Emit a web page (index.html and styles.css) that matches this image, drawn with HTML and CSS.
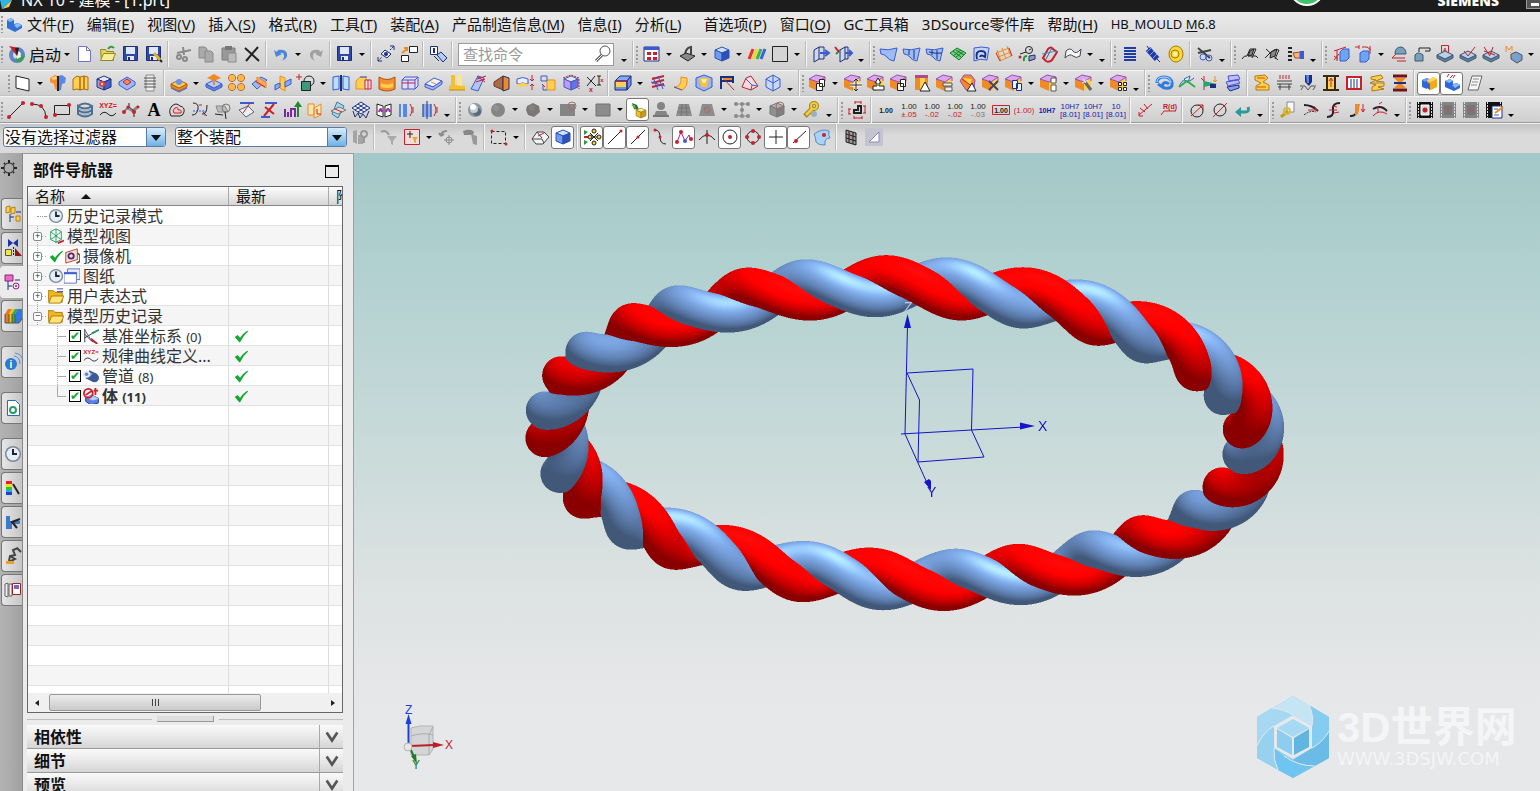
FILE: index.html
```html
<!DOCTYPE html>
<html lang="zh-CN">
<head>
  <meta charset="UTF-8">
  <meta name="viewport" content="width=device-width, initial-scale=1.0">
  <title>NX 10 - 建模 - [1.prt]</title>
  <link rel="stylesheet" href="styles.css">
</head>
<body>

<header class="titlebar">
  <svg class="app-logo" width="14" height="12" viewBox="0 0 14 12"><path fill="#29b6e8" d="M0 0h12L2 9z"/><path fill="#f6c94a" d="M2 9l10-9-3 7z"/></svg>
  <span class="title">NX 10 - 建模 - [1.prt]</span>
  <span class="badge"></span>
  <span class="brand">SIEMENS</span>
  <button class="minimize" aria-label="最小化"></button>
</header>

<nav class="menubar">
  <span class="grip"></span>
  <svg width="16" height="16" viewBox="0 0 16 16"><path fill="#2f6fd6" d="M1 4l4-2 3 2v4l4-1 4 2v3l-7 4-8-4z"/><path fill="#8fbdf5" d="M1 4l4-2 3 2-4 2zM8 9l4-2 4 2-5 3z"/></svg>
  <a href="#">文件(<u>F</u>)</a>
  <a href="#">编辑(<u>E</u>)</a>
  <a href="#">视图(<u>V</u>)</a>
  <a href="#">插入(<u>S</u>)</a>
  <a href="#">格式(<u>R</u>)</a>
  <a href="#">工具(<u>T</u>)</a>
  <a href="#">装配(<u>A</u>)</a>
  <a href="#">产品制造信息(<u>M</u>)</a>
  <a href="#">信息(<u>I</u>)</a>
  <a href="#">分析(<u>L</u>)</a>
  <a href="#" class="wide">首选项(<u>P</u>)</a>
  <a href="#">窗口(<u>O</u>)</a>
  <a href="#">GC工具箱</a>
  <a href="#">3DSource零件库</a>
  <a href="#">帮助(<u>H</u>)</a>
  <a href="#" class="latin">HB_MOULD <u>M</u>6.8</a>
</nav>

<!-- Toolbars: "v" drop-down, "V" overflow arrow, "|" separator, "#" next bar, "*" pressed -->
<div class="toolbar row-std">
  <span class="grip"></span>
  <button class="start"><span data-icon="start"></span>启动</button>
  <div class="tools" data-icons="v new open save saveas | cut copy paste delete | undo v redo | save v | link swap | info |"></div>
  <label class="search"><input type="text" placeholder="查找命令" aria-label="查找命令"><span data-icon="magnify"></span></label>
  <div class="tools" data-icons="V # fitwin v clip v cubeblue v stripes square v | door doorx V # sheet1 sheet2 sheet3 meshg swirl mesho gauge section ribbon v V # coil spring ring | scissors V # pen1 pen2 hand V # dimbox dimbox2 v probe arm tagA tagv tagk tagm v"></div>
</div>

<div class="toolbar row-feat">
  <span class="grip"></span>
  <div class="tools" data-icons="plane v extrude revolve hole unite thread | pattern v draft dots4 trim trim2 boolean v mirror split bend shell block thick flange flip fillet offset boxdash delx | blend v hatch curl cone rib pyramid wire V # opcopy v opmove oparrow opcopy opcyl opsheet opsplit opdel oppage v opnum v opwand v opgrid V # loop wave axisg layers | press1 press2 drill press3 bars press4 press5 | twin* partcopy* script V"></div>
</div>

<div class="toolbar row-curve">
  <span class="grip"></span>
  <div class="tools" data-icons="line arc rect helix xyz spline textA offcurve bridge project ribline cutline histo sheetp isect net mirrorc cyl1 cyl2 V # ball gball v gball2 v gsq v gsq2 v lamp* guser ggrid gno v gnodes v gcube v wrench V # dimL | d1 d2 d3 d3 d4 d5 d6 d7 d8 d8 d9 | rough rough2 | dia dia2 back V # keyp curve1 curve2 curve3 curve4 V # film film2 film2 filmedit V"></div>
</div>

<div class="toolbar row-select">
  <span class="combo combo-a"><select aria-label="类型过滤器"><option>没有选择过滤器</option></select></span>
  <span class="combo combo-b"><select aria-label="选择范围"><option>整个装配</option></select></span>
  <div class="tools" data-icons="gfind | gfilter selpt v gundo gbrush | marquee v | eraser cubeblue* | snap* seg* mid* ctrl zig* tan circ* quad plus* online* face | grid3 tri"></div>
</div>

<main class="workspace">
  <nav class="resource-bar">
    <button class="gear" data-icon="gear" aria-label="设置"></button>
    <button class="tab" data-icon="treeY" aria-label="装配导航器"></button>
    <button class="tab" data-icon="constraint" aria-label="约束导航器"></button>
    <button class="tab active" data-icon="treeP" aria-label="部件导航器"></button>
    <button class="tab" data-icon="books" aria-label="重用库"></button>
    <button class="tab spaced" data-icon="web" aria-label="浏览器"></button>
    <button class="tab spaced" data-icon="doc" aria-label="文档"></button>
    <button class="tab spaced" data-icon="clock" aria-label="历史记录"></button>
    <button class="tab" data-icon="spectrum" aria-label="材料"></button>
    <button class="tab" data-icon="clamp" aria-label="加工向导"></button>
    <button class="tab" data-icon="robot" aria-label="角色"></button>
    <button class="tab" data-icon="cards" aria-label="场景"></button>
  </nav>

  <aside class="navigator">
    <div class="nav-title"><h2>部件导航器</h2><button class="undock" aria-label="浮动"></button></div>
    <div class="tree-box">
      <table class="tree">
        <thead><tr><th>名称 <span class="sort"></span></th><th>最新</th><th>附</th></tr></thead>
        <tbody>
          <tr><td><div class="node"><i class="leaf"></i><span data-icon="clock"></span>历史记录模式</div></td><td></td><td></td></tr>
          <tr><td><div class="node"><button class="exp">+</button><span data-icon="views"></span>模型视图</div></td><td></td><td></td></tr>
          <tr><td><div class="node"><button class="exp">+</button><span data-icon="check"></span><span data-icon="camera"></span>摄像机</div></td><td></td><td></td></tr>
          <tr><td><div class="node"><button class="exp">+</button><span data-icon="clock"></span><span data-icon="drawing"></span>图纸</div></td><td></td><td></td></tr>
          <tr><td><div class="node"><button class="exp">+</button><span data-icon="folderx"></span>用户表达式</div></td><td></td><td></td></tr>
          <tr><td><div class="node"><button class="exp">−</button><span data-icon="folder"></span>模型历史记录</div></td><td></td><td></td></tr>
          <tr><td><div class="node sub"><input type="checkbox" id="f0" checked><span data-icon="csys"></span><label for="f0">基准坐标系 <small>(0)</small></label></div></td><td><span data-icon="check"></span></td><td></td></tr>
          <tr><td><div class="node sub"><input type="checkbox" id="f1" checked><span data-icon="xyz"></span><label for="f1">规律曲线定义...</label></div></td><td><span data-icon="check"></span></td><td></td></tr>
          <tr><td><div class="node sub"><input type="checkbox" id="f2" checked><span data-icon="tube"></span><label for="f2">管道 <small>(8)</small></label></div></td><td><span data-icon="check"></span></td><td></td></tr>
          <tr><td><div class="node sub last"><input type="checkbox" id="f3" checked><span data-icon="body"></span><label for="f3"><b>体 <small>(11)</small></b></label></div></td><td><span data-icon="check"></span></td><td></td></tr>
          <tr><td></td><td></td><td></td></tr>
          <tr><td></td><td></td><td></td></tr>
          <tr><td></td><td></td><td></td></tr>
          <tr><td></td><td></td><td></td></tr>
          <tr><td></td><td></td><td></td></tr>
          <tr><td></td><td></td><td></td></tr>
          <tr><td></td><td></td><td></td></tr>
          <tr><td></td><td></td><td></td></tr>
          <tr><td></td><td></td><td></td></tr>
          <tr><td></td><td></td><td></td></tr>
          <tr><td></td><td></td><td></td></tr>
          <tr><td></td><td></td><td></td></tr>
          <tr><td></td><td></td><td></td></tr>
          <tr><td></td><td></td><td></td></tr>
          <tr><td></td><td></td><td></td></tr>
        </tbody>
      </table>
      <div class="hscroll">
        <button class="left" aria-label="向左"></button>
        <div class="track"><div class="thumb"><i></i><i></i><i></i></div></div>
        <button class="right" aria-label="向右"></button>
      </div>
    </div>
    <div class="splitter"><span></span><b></b><span></span></div>
    <div class="sections">
      <button class="section"><span>相依性</span><i data-icon="chevron"></i></button>
      <button class="section"><span>细节</span><i data-icon="chevron"></i></button>
      <button class="section"><span>预览</span><i data-icon="chevron"></i></button>
    </div>
  </aside>

  <section class="viewport">
    <canvas id="model" class="model" width="780" height="370"></canvas>
    <svg class="csys" width="170" height="210" viewBox="890 295 170 210" fill="none" stroke="#1414c8">
      <path d="M905 434L907.500 325M901 434L1024 427M905 434L927 483M907 373L973 369L971.500 430L984 457L918 462M907 373L919.500 400L918 462"/>
      <path fill="#1414c8" stroke="none" d="M907.500 314l-3.500 14h7zM1035 426l-15-3.500v7zM931 490l-7-8 5-3 2 2z"/>
      <g fill="#1414c8" stroke="none" font-family="Liberation Sans, Arial, sans-serif" font-size="14"><text x="1038" y="431">X</text><text x="927" y="497">Y</text><text x="904" y="312" fill="#b9c9e6">Z</text></g>
    </svg>
    <svg class="triad" width="60" height="70" viewBox="400 702 60 70">
      <path fill="#d0d2d3" stroke="#a9abad" opacity=".85" d="M411 728l9-2h13v23l-4 6h-18z"/>
      <path fill="none" stroke="#a9abad" d="M411 736q12-4 22-1M429 755v-20l4-8"/>
      <path stroke="#1c3ee0" stroke-width="2" d="M408.500 745v-21"/><path fill="#1c3ee0" d="M408.500 714l-3 10h6z"/>
      <path stroke="#c01c2c" stroke-width="2" d="M410 746l24-1"/><path fill="#c01c2c" d="M444 745l-11-3v6z"/>
      <path stroke="#1f7a2e" stroke-width="2" d="M410 748l4 9"/><path fill="#1f7a2e" d="M417 764l-6-8 5-2z"/>
      <circle cx="408" cy="747" r="4" fill="#e6e6e4" stroke="#b5b5b5"/>
      <g font-family="Liberation Sans, Arial, sans-serif" font-size="12"><text x="405" y="714" fill="#1c3ee0">Z</text><text x="445" y="749" fill="#c01c2c">X</text><text x="412" y="769" fill="#1f7a2e">Y</text></g>
    </svg>
    <div class="watermark">
      <svg width="72" height="82" viewBox="0 0 72 82">
        <path fill="#93d0f0" d="M36 0l36 21v41L36 82 0 62V21z"/>
        <path fill="#c5e4f4" d="M15 12L36 0l16 9q5 10 3 21L36 19q-9-6-21-7z"/>
        <path fill="#84cdf1" d="M52 9l20 12v14Q66 46 55 52V30q2-11-3-21z"/>
        <path fill="#6abce6" d="M72 35v27L58 70Q42 70 27 60l9 4 19-12q11-6 17-17z"/>
        <path fill="#6fc4f0" d="M17 52l10 8q14 10 31 10L36 82 21 74q-5-10-4-22z"/>
        <path fill="#96d1f0" d="M0 62V50Q6 36 17 30v22q-1 12 4 22z"/>
        <path fill="#a6d8f2" d="M0 50V21l15-9q12 1 21 7L17 30Q6 36 0 50z"/>
        <path fill="none" stroke="#e6e9eb" d="M15 12q12 1 21 7M52 9q5 10 3 21M72 35q-6 11-17 17M58 70q-17 0-31-10M21 74q-5-10-4-22M0 50q6-14 17-20"/>
        <path fill="#e6e9eb" d="M36 19l19 11v22L36 63 17 52V30z"/>
        <path fill="#a8d9f2" d="M36 23l16 9-16 9-16-9z"/><path fill="#8ccdf0" d="M20 33l15 9v17l-15-8z"/><path fill="#62b5e0" d="M52 33l-15 9v17l15-8z"/>
      </svg>
      <div class="wm-text"><strong>3D世界网</strong><span>WWW.3DSJW.COM</span></div>
    </div>
  </section>
</main>

<script src="app.js"></script>
</body>
</html>
```
FILE: styles.css
```css
* {
  box-sizing: border-box;
}
body {
  margin: 0;
  height: 100vh;
  display: flex;
  flex-direction: column;
  overflow: hidden;
  background: #d9d9d9;
  color: #111;
  font-family: "Noto Sans", "Noto Sans CJK SC", sans-serif;
  font-size: 15px;
}
button {
  padding: 0;
  border: 0;
  background: none;
  font: inherit;
  color: inherit;
}
svg {
  display: block;
  flex: none;
}

/* title bar */
.titlebar {
  position: relative;
  display: flex;
  align-items: flex-end;
  flex: none;
  height: 12px;
  background: #1c1c1c;
  color: #fff;
}
.app-logo {
  margin-right: 7px;
}
.title {
  flex: 1;
  font-size: 16px;
  line-height: 20px;
  margin-bottom: 2px;
  white-space: nowrap;
}
.badge {
  position: absolute;
  right: 215px;
  bottom: 6px;
  width: 36px;
  height: 36px;
  border: 2px solid #fff;
  border-radius: 50%;
  background: #3fc46a;
}
.brand {
  font: 800 14px/16px "Open Sans", sans-serif;
  margin: 0 27px 3px 0;
}
.minimize {
  width: 14px;
  height: 9px;
  margin-bottom: 3px;
  background: #555 linear-gradient(#fff, #fff) 4px 3px / 8px 3px no-repeat;
  border: 1px solid #999;
  border-width: 0 0 1px 1px;
}

/* menu */
.menubar {
  display: flex;
  align-items: center;
  flex: none;
  height: 26px;
  padding-bottom: 3px;
  background: linear-gradient(#eaeaea, #dcdcdc);
  white-space: nowrap;
}
.menubar a {
  margin-left: 13px;
  color: #111;
  text-decoration: none;
}
.menubar svg + a {
  margin-left: 5px;
}
.menubar a.wide {
  margin-left: 22px;
}
.menubar .latin {
  font-size: 13px;
}
.menubar u {
  text-underline-offset: 2px;
}
.menubar .grip {
  margin-right: 2px;
}

/* toolbars */
.toolbar {
  display: flex;
  align-items: center;
  flex: none;
  border-top: 1px solid #f4f4f4;
  border-bottom: 1px solid #c4c4c4;
  background: linear-gradient(#e2e2e2, #cfcfcf);
  white-space: nowrap;
}
.row-std {
  height: 32px;
}
.row-feat {
  height: 26px;
  padding-left: 7px;
}
.row-curve {
  height: 27px;
  border-bottom-color: #999;
}
.row-select {
  height: 30px;
  padding-bottom: 3px;
  background: linear-gradient(#c4c4c4, #dadada 40%);
  border-bottom: 0;
}
.grip {
  flex: none;
  width: 4px;
  height: 18px;
  background: radial-gradient(#999 1px, transparent 1px) 0 0 / 4px 4px;
}
.tools {
  display: flex;
  align-items: center;
}
.tool {
  flex: none;
  display: grid;
  place-items: center;
  width: 23px;
  height: 23px;
}
.tool.on {
  border: 1px solid #777;
  border-radius: 3px;
  background: #fff;
}
.drop {
  flex: none;
  display: grid;
  place-items: center;
  width: 12px;
  height: 23px;
}
.drop::before {
  content: "";
  border: 3px solid transparent;
  border-top-color: #000;
  border-bottom: 0;
}
.drop.low {
  place-items: end center;
  padding-bottom: 4px;
}
.sep {
  flex: none;
  width: 2px;
  height: 26px;
  margin: 0 2px;
  background: linear-gradient(90deg, #bbb 50%, #f6f6f6 50%);
}
.tools .grip {
  margin: 0 1px 0 -1px;
}
.start {
  display: flex;
  align-items: center;
  gap: 2px;
  margin-left: 3px;
  font-size: 16px;
}
.search {
  display: flex;
  align-items: center;
  width: 156px;
  height: 23px;
  margin: 0 4px 0 3px;
  border: 1px solid #999;
  background: #fff;
}
.search input {
  min-width: 0;
  flex: 1;
  border: 0;
  outline: 0;
  padding: 0 4px;
  background: none;
  font: inherit;
}
.search input::placeholder {
  color: #999;
}
.combo {
  position: relative;
  height: 20px;
  margin-left: 3px;
}
.combo-a {
  width: 163px;
}
.combo-b {
  width: 172px;
  margin: 0 1px 0 9px;
}
.combo select {
  appearance: none;
  width: 100%;
  height: 20px;
  padding: 0 1px;
  border: 1px solid #5b7ba5;
  border-radius: 3px;
  background: #fff;
  color: #111;
  font: inherit;
  font-size: 16px;
  line-height: 18px;
}
/* blue drop-down cap on top of the select */
.combo::before {
  content: "";
  position: absolute;
  right: 1px;
  top: 1px;
  width: 18px;
  height: 18px;
  border-left: 1px solid #5b7ba5;
  border-radius: 0 2px 2px 0;
  background: linear-gradient(#d8ecfb, #a5d0f2 50%, #6fb1e6);
  pointer-events: none;
}
.combo::after {
  content: "";
  position: absolute;
  right: 5px;
  top: 8px;
  border: 5px solid transparent;
  border-top: 6px solid #111;
  border-bottom: 0;
  pointer-events: none;
}

/* workspace */
.workspace {
  flex: 1;
  min-height: 0;
  display: flex;
}
.resource-bar {
  flex: none;
  width: 23px;
  padding-top: 5px;
  display: flex;
  flex-direction: column;
  background: linear-gradient(90deg, #b3b3b3, #a2a2a2);
  border-right: 1px solid #888;
}
.gear {
  height: 20px;
  margin: 0 0 20px -1px;
}
.tab {
  flex: none;
  height: 32px;
  margin: 0 0 2px 1px;
  padding-left: 1px;
  border: 1px solid #777;
  border-right: 0;
  border-radius: 4px 0 0 4px;
  background: linear-gradient(90deg, #e6e6e6, #c6c6c6);
}
.tab.active {
  margin-right: -1px;
  margin-left: 0;
  border-color: #ebebeb;
  background: #ebebeb;
}
.tab.spaced {
  margin-top: 12px;
}
.navigator {
  flex: none;
  width: 331px;
  padding: 0 10px 0 4px;
  display: flex;
  flex-direction: column;
  background: #ebebeb;
  border-top: 1px solid #999;
  border-right: 1px solid #93a5a8;
}
.nav-title {
  flex: none;
  display: flex;
  justify-content: space-between;
  align-items: center;
  height: 32px;
  padding: 0 4px 2px 6px;
}
.nav-title h2 {
  margin: 0;
  font-size: 16px;
}
.undock {
  width: 14px;
  height: 13px;
  margin-top: 4px;
  border: 1px solid #000;
  border-top-width: 2px;
}
.tree-box {
  flex: 1;
  min-height: 0;
  display: flex;
  flex-direction: column;
  justify-content: space-between;
  overflow: hidden;
  border: 1px solid #666;
  background: #fff;
}
.tree {
  flex: 1;
  display: block;
  min-height: 0;
  overflow: hidden;
  width: 100%;
  border-spacing: 0;
}
.tree tr {
  display: grid;
  grid-template-columns: 201px 100px 1fr;
}
.tree th,
.tree td {
  height: 20px;
  padding: 0;
  overflow: hidden;
  line-height: 20px;
  white-space: nowrap;
  border-right: 1px solid #ddd;
}
.tree th {
  height: 19px;
  padding: 0 7px;
  line-height: 18px;
  text-align: left;
  font-weight: normal;
  background: linear-gradient(#fdfdfd, #d6d6d6);
  border-right-color: #aaa;
  border-bottom: 1px solid #888;
}
.tree td {
  border-bottom: 1px solid #e2e2e2;
}
.tree td:nth-child(2) {
  padding: 2px 0 0 4px;
}
.tree tbody tr:nth-child(even) {
  background: #f5f5f5;
}
.sort {
  display: inline-block;
  margin: 0 0 3px 12px;
  border: 5px solid transparent;
  border-bottom-color: #111;
  border-top: 0;
}
.node {
  display: flex;
  align-items: center;
  height: 20px;
  padding-left: 5px;
  color: #333;
  font-size: 16px;
  background: linear-gradient(90deg, #aaa 50%, transparent 50%) 14px 10px / 2px 1px no-repeat,
    linear-gradient(90deg, #aaa 50%, transparent 50%) 17px 10px / 2px 1px no-repeat,
    linear-gradient(#aaa 50%, transparent 50%) 9px 0 / 1px 2px repeat-y;
}
tr:first-child .node {
  background-position: 14px 10px, 17px 10px, 9px 10px;
  background-repeat: no-repeat;
}
.node [data-icon] {
  width: 16px;
}
.node > [data-icon]:last-of-type {
  margin-right: 3px;
}
.node small {
  font-size: 13px;
}
.exp {
  width: 9px;
  height: 9px;
  margin-right: 6px;
  border: 1px solid #888;
  border-radius: 2px;
  background: #fff;
  font-size: 9px;
  line-height: 6px;
}
.leaf {
  width: 10px;
  height: 1px;
  margin: 0 1px 0 4px;
  border-top: 1px dotted #999;
}
.sub {
  padding-left: 41px;
  background: linear-gradient(90deg, #aaa 50%, transparent 50%) 29px 10px / 2px 1px repeat-x content-box,
    linear-gradient(#aaa, #aaa) 29px 10px / 9px 1px no-repeat,
    linear-gradient(#aaa 50%, transparent 50%) 29px 0 / 1px 2px repeat-y;
}
.sub.last {
  background: linear-gradient(#aaa, #aaa) 29px 10px / 9px 1px no-repeat,
    linear-gradient(#aaa, #aaa) 29px 0 / 1px 10px no-repeat;
}
.sub:not(.last) {
  background: linear-gradient(#aaa, #aaa) 29px 10px / 9px 1px no-repeat,
    linear-gradient(#aaa 50%, transparent 50%) 29px 0 / 1px 2px repeat-y;
}
.sub input {
  appearance: none;
  flex: none;
  width: 12px;
  height: 12px;
  margin: 0 2px 0 0;
  border: 1px solid #000;
  background: #fff;
}
.sub input:checked::after {
  content: "✔";
  display: block;
  color: #14a82c;
  font: 12px/10px "DejaVu Sans", sans-serif;
}
.hscroll {
  flex: none;
  display: flex;
  align-items: center;
  height: 19px;
  padding: 0 7px;
  background: #f0f0f0;
}
.left,
.right {
  border: 3px solid transparent;
}
.left {
  border-right: 4px solid #222;
  border-left: 0;
}
.right {
  border-left: 4px solid #222;
  border-right: 0;
}
.track {
  flex: 1;
  padding: 0 10px;
}
.thumb {
  width: 78%;
  height: 17px;
  display: flex;
  justify-content: center;
  align-items: center;
  gap: 2px;
  border: 1px solid #999;
  border-radius: 2px;
  background: linear-gradient(#ececec, #c9c9c9);
}
.thumb i {
  width: 1px;
  height: 7px;
  background: #444;
}
.splitter {
  flex: none;
  display: flex;
  align-items: center;
  gap: 5px;
  height: 12px;
}
.splitter span {
  flex: 1;
  height: 1px;
  background: #bbb;
}
.splitter b {
  width: 57px;
  height: 6px;
  border: 1px solid #999;
  border-width: 0 1px 1px 0;
  background: #ddd;
}
.sections {
  flex: none;
  height: 66px;
  overflow: hidden;
}
.section {
  display: flex;
  align-items: center;
  width: 100%;
  height: 24px;
  border-bottom: 1px solid #999;
  background: linear-gradient(#fafafa, #e9e9e9 50%, #d5d5d5);
  font-size: 16px;
  font-weight: bold;
}
.section span {
  flex: 1;
  padding-left: 7px;
  line-height: 20px;
  text-align: left;
}
.section i {
  display: grid;
  place-items: center;
  width: 24px;
  height: 23px;
  border-left: 1px solid #aaa;
}

/* graphics window */
.viewport {
  position: relative;
  flex: 1;
  overflow: hidden;
  background: linear-gradient(#a3c8c7, #b3d1d1 20%, #c8dad9 45%, #dde2e2 68%, #e6e7e9 85%, #e6e8ea);
}
.model {
  position: absolute;
  left: 161px;
  top: 95px;
}
.csys {
  position: absolute;
  left: 536px;
  top: 142px;
}
.triad {
  position: absolute;
  left: 46px;
  top: 549px;
}
.watermark {
  position: absolute;
  right: 24px;
  bottom: 13px;
  display: flex;
  align-items: center;
  gap: 8px;
  color: #f4f5f6;
}
.wm-text {
  display: flex;
  flex-direction: column;
  width: 179px;
}
.wm-text strong {
  font: bold 42px/44px "Liberation Sans", "Noto Sans CJK SC", sans-serif;
  white-space: nowrap;
}
.wm-text span {
  font: 18px/18px "DejaVu Sans", sans-serif;
}
```
FILE: app.js
```js
// ---- icon helpers, all icons use a 20x20 box ----
const f = (c, d) => `<path fill="${c}" d="${d}"/>`;
const s = (c, d, w = 1) => `<path fill="none" stroke="${c}" stroke-width="${w}" d="${d}"/>`;
const fs = (c, k, d) => `<path fill="${c}" stroke="${k}" d="${d}"/>`;
const dash = (c, d) => `<path fill="none" stroke="${c}" stroke-dasharray="2 1" d="${d}"/>`;
const dot = (c, x, y, r = 2) => `<circle cx="${x}" cy="${y}" r="${r}" fill="${c}"/>`;
const ring = (c, x, y, r, w = 1) => `<circle cx="${x}" cy="${y}" r="${r}" fill="none" stroke="${c}" stroke-width="${w}"/>`;
const t = (c, x, y, size, str, w = 'bold') => `<text x="${x}" y="${y}" fill="${c}" font-size="${size}" text-anchor="middle" font-weight="${w}" font-family="Liberation Sans, Arial, sans-serif">${str}</text>`;

const B = '#3b5bd0', N = '#1c2f7c', L = '#b4ccf8', O = '#f08a24', Y = '#ffcf52', R = '#c8202c', G = '#8a8a8a', K = '#222';

const box = (top, left, right, k) =>
  fs(top, k, 'M10 3l7 3-7 3-7-3z') + fs(left, k, 'M3 6l7 3v8l-7-3z') + fs(right, k, 'M17 6l-7 3v8l7-3z');
const slab = (top, side, k) =>
  fs(side, k, 'M2 11v3l8 4 8-4v-3l-8 4z') + fs(top, k, 'M10 7l8 4-8 4-8-4z');
const op = f('#d9a8ea', 'M1 6l7-4 9 2-6 5z') + f(O, 'M1 6l9 3v9l-9-4z') + f(Y, 'M10 9l7-5v9l-7 5z') + s('#9a4cb8', 'M1 6l7-4 9 2v4M1 6l9 3 7-5', 1);
const floppy = fs('#2f49a8', N, 'M2.500 2.500h14v14h-14z') + f('#dfe8f8', 'M5 3h9v7H5z') + f('#e8e8e8', 'M6 12h7v4H6z') + f(N, 'M7 13h2v3H7z');
const sheet = f('#9dbcf5', 'M1 5q8 2 17-1l-3 13q-6-1-7-4-3-3-6-3z') + s(B, 'M1 5q8 2 17-1l-3 13q-6-1-7-4-3-3-6-3z');
const dim = (a, b, c = K, d = R) => t(c, 10, 9, 8, a, 'normal') + t(d, 10, 17, 8, b, 'normal');
const photo = c => f(c, 'M2 2h16v16H2z') + dash('#ddd', 'M3.500 2v16M16.500 2v16');

const icons = {
  start: ring('#5a86c8', 10, 11, 6, 4) + f('#3aa048', 'M10 11l8 1-4 6-6-1z') + f('#e8eef8', 'M8 10l5-2 1 5-4 2z') + f(R, 'M2 2l10 2-2 8z') + f(K, 'M8 4l4 0-2 8z'),
  new: fs('#fff', '#6f74c8', 'M3.500 2.500h8l4 4v11h-12z') + s('#6f74c8', 'M11.500 2.500v4h4'),
  open: fs('#e8d55a', '#8f8a20', 'M2.500 5.500h5l1 2h7v9h-12z') + fs('#f6ee9a', '#8f8a20', 'M5.500 9.500h12l-3 7h-12z') + s('#3a9a3a', 'M10 5q3-4 6-1', 2),
  save: floppy,
  saveas: floppy + s('#e0b030', 'M10 9l7 8', 3) + s(K, 'M16 16l2 2', 2),
  cut: s(G, 'M10 3l1 8M4 9l14-3', 2) + ring(G, 6, 13, 2, 2) + ring(G, 12, 15, 2, 2),
  copy: fs('#aaa', G, 'M3 3h6l2 2v9H3z') + fs('#aaa', G, 'M9 7h6l2 2v9H9z'),
  paste: fs('#999', '#7d7d7d', 'M3 4h13v12H3z') + fs('#bbb', G, 'M9 9h8v9H9z') + f('#777', 'M6 2h7v4H6z'),
  delete: s('#222', 'M3 4l14 13M16 3L4 17', 2),
  undo: f('#4a86d8', 'M3 6l2 7 6-3-2-1q4-1 4 3t-3 5q7-2 6-7t-9-4L6 8z'),
  redo: f('#a0a0a0', 'M17 6l-2 7-6-3 2-1q-4-1-4 3t3 5Q3 15 4 10t9-4l1 2z'),
  link: fs('#e8ecff', N, 'M9 6l6 4-4 4-6-4z') + dash(N, 'M2 17l4-4M14 6l4-4') + s(N, 'M2 13v4h4M14 2h4v4') + dot(N, 10, 10, 2),
  swap: fs('#fff', K, 'M10.500 2.500h8v6h-8zM2.500 11.500h7v6h-7z') + s(O, 'M3 9l5-4M5 4h3v3', 2),
  info: fs('#fff', N, 'M2.500 2.500h7v8h-7z') + f(N, 'M5 4h2v5H5z') + fs(L, N, 'M9 11l4-3 6 6-4 4z') + s(N, 'M6 12l5 5'),
  magnify: ring('#555', 12, 7, 5, 1) + s('#555', 'M9 11l-6 6', 3) + s('#fff', 'M9 11l-6 6'),
  fitwin: fs('#fff', N, 'M2 3h15v14H2z') + f(B, 'M2 3h15v3H2z') + f(R, 'M5 8h4v3H5zM11 8h4v3h-4zM5 13h4v3H5zM11 13h4v3h-4z'),
  clip: s('#444', 'M8 12q0-8 6-9v7', 2) + fs('#888', K, 'M3 12l6-3 9 3-7 5z'),
  cubeblue: box('#cfe0fc', '#6f9cf0', '#2c52b8', '#2c52b8'),
  stripes: s('#e83030', 'M2 15l4-10', 3) + s('#f0d820', 'M6 15l4-10', 3) + s('#34b44a', 'M10 15l4-10', 3) + s('#3464d8', 'M14 15l4-10', 3),
  square: fs('#d4d4d4', K, 'M2.500 2.500h15v15h-15z'),
  door: fs('#cfd8ea', N, 'M3 6l5-3v12l-5 3zM8 3h5v12H8') + s(B, 'M9 9h8M14 6l4 3-4 3', 2),
  doorx: fs('#cfd8ea', N, 'M6 6l5-3v12l-5 3zM11 3h3v12h-3') + s('#1f9a38', 'M2 10l4-4', 2) + s(R, 'M1 3l4 5', 2) + s(B, 'M11 9h7M15 6l3 3-3 3', 2),
  sheet1: sheet,
  sheet2: sheet + s(N, 'M7 6v5M12 6v9'),
  sheet3: sheet + s(N, 'M7 6v5M12 6v9M4 8q7 2 13 1'),
  meshg: fs('#6ed07e', '#1d7a2e', 'M2 9l7-5 9 5-7 7z') + s('#1d7a2e', 'M5 7l8 6M8 6l8 5M5 12l8-6M8 13l8-6'),
  swirl: fs('#c4d4fa', B, 'M3 4q8-2 15 0l-2 12q-7-2-13 1z') + s(N, 'M6 15q-2-8 4-8t4 6q-4-3-5 0', 2),
  mesho: s(O, 'M3 6l4 11M8 4l4 11M13 2l4 11M2 9l13-5M4 13l13-5M6 17l11-5') + s(R, 'M2 9l4 8M15 4l3 8', 1),
  gauge: ring(K, 12, 6, 3.500, 1) + s(K, 'M12 6l2-1M3 10l6-2') + s('#1f9a38', 'M7 17q-1-5 3-5', 2) + fs('#99a', N, 'M12 12l6-1v4l-6 2z') + dot(R, 3, 13, 1.500),
  section: s(R, 'M3 14l5-9q3-3 5 0l4 3-5 8q-3 3-6 1z', 2) + s('#2aa0b0', 'M2 10l15-3') + s(B, 'M6 15l6-11', 1),
  ribbon: fs('#f4f6fa', '#444', 'M3 7q4-4 7 0t8-2l-1 7q-4 3-7 0t-8 2z'),
  coil: s('#1f3da8', 'M4 4h12M4 7h12M4 10h12M4 13h12M4 16h12', 2),
  spring: s('#1f3da8', 'M5 5l9 10', 6) + s('#7f9cf0', 'M8 4l-4 4M11 7l-4 4M14 10l-4 4') + s(N, 'M4 2l2 3M14 15l3 3', 1),
  ring: `<ellipse cx="10" cy="10" rx="7" ry="8" fill="#ffd83a" stroke="#a07a08"/>` + ring('#a07a08', 9, 10, 4, 1) + dot('#fff4b0', 9, 10, 2),
  scissors: s('#444', 'M3 4l12 10M3 9L16 6', 2) + ring(B, 14, 14, 3, 1) + ring(B, 8, 13, 3, 1),
  pen1: s(K, 'M2 15q2-4 5-3l3-7h6l-4 9M8 12h8l2 2', 1) + fs('#888', K, 'M10 7l4-2-2 6-4 1z'),
  pen2: s(K, 'M3 5l12 11M2 14l6-6q4-4 8-2l-4 9') + fs('#888', K, 'M8 8l6-3-2 7-5 2z'),
  hand: s(K, 'M2 4h4M2 8h4M2 12h4M2 16h4', 2) + fs('#ffb27a', '#a04a20', 'M7 9l7-1v6H9z') + f(B, 'M14 7h4v8h-4z'),
  dimbox: fs('#6ea4f0', B, 'M9 8l3-3h6v9l-3 3H9z') + s(R, 'M3 7l12-4M3 12l4 3M3 16l5-6M6 6v11'),
  dimbox2: fs('#6ea4f0', B, 'M6 9l3-2h6v8l-3 3H6z') + s(R, 'M1 3h4M8 3h5M5 1v4M13 3l4 3M16 2v8'),
  probe: fs('#7aa0c0', '#456', 'M6 10q0-7 6-7 5 1 5 7z') + s(R, 'M3 14l4-4M3 14h13M8 17h9', 1),
  arm: fs('#7aa0c0', '#456', 'M3 17v-6q3-4 8 0v6z') + s(K, 'M7 8V4h11v3h-5', 1),
  tagA: s(R, 'M6.500 1.500h7v7h-7zM10 9v4') + t(R, 10, 8, 6, 'A') + slab('#b8d0e8', '#5a80a8', '#456'),
  tagv: slab('#b8d0e8', '#5a80a8', '#456') + s(R, 'M6 7l4 5 7-9', 1),
  tagk: slab('#b8d0e8', '#5a80a8', '#456') + s(R, 'M3 3l6 9M3 7l11 4M12 3l-3 8', 1),
  tagm: fs('#7aa0d0', '#456', 'M7 10l5-2 6 3v5l-5 3-6-4z') + s(O, 'M2 8V2l3 4 3-4v5M6 8l4 4', 1),

  plane: fs('#fff', K, 'M3 3l13 3v12L3 15z'),
  extrude: f('#f09030', 'M2 5l5-3 3 1v14l-3-1-1-5-4-2z') + f('#5a86e8', 'M10 3l4-1 4 3-1 5-3 1-1 6-3 1z') + s(K, 'M10 3v15', 2) + f('#ffd080', 'M3 5l5-2 1 3-4 1z'),
  revolve: fs(Y, '#b06a10', 'M2 6l4-3 3 1v13l-3-1-4 1zM9 4l4-1v13l-4 1zM13 3l4 1v13l-4-1z'),
  hole: box('#dfe8ff', '#8ca4f0', '#4562c8', N) + dot('#f04030', 8, 11, 3) + dot('#fff', 8, 11, 1),
  unite: fs('#9cb8f5', B, 'M2 9l8-5 8 5v3l-8 5-8-5z') + fs('#f58a5a', R, 'M6 9l4-3 4 3-4 3z'),
  thread: fs('#eee', G, 'M6 2h8v16H6z') + s('#555', 'M4 5h12M4 8h12M4 11h12M4 14h12'),
  pattern: slab(Y, O, '#b06010') + dot('#6a94f0', 10, 9, 3) + s(B, 'M2 15l8 4 8-4'),
  draft: slab('#b4ccf8', '#6a80d0', B) + f(O, 'M3 5l7-4 7 4-7 3z') + s(O, 'M10 2v10', 2),
  dots4: [[5, 5], [14, 5], [5, 14], [14, 14]].map(p => ring('#b05a08', p[0], p[1], 3.500, 1) + dot('#ffb648', p[0], p[1], 3)).join(''),
  trim: fs('#9cb8f5', B, 'M2 11l9-7 6 3-10 9z') + fs('#f6a860', O, 'M7 4l9 5v6l-9-5z') + s(R, 'M5 8l10 6'),
  trim2: fs(Y, O, 'M7 3l5 2v13l-5-3z') + fs('#8aacf5', B, 'M2 12l5-2v4l-5 3zM12 9l6-3v5l-6 3z'),
  boolean: ring(K, 13, 8, 5, 1) + fs('#3a9a80', K, 'M5.500 8.500h9v9h-9z') + s(R, 'M3 1v6M0 4h6', 1),
  mirror: fs('#b8e0f8', B, 'M2 4l6-1v13l-6 1zM18 4l-6-1v13l6 1z') + s(N, 'M10 2v16', 2),
  split: fs(Y, O, 'M2 8l4-4h6v12H2z') + s(B, 'M6 4h7') + fs('#f8e0f4', R, 'M11 7h6v9h-6z') + s(R, 'M14 7v9'),
  bend: fs('#f59030', '#b05010', 'M2 4q8 5 16 0v12q-8 4-16 0z') + f(Y, 'M4 10q6 3 12 0v4q-6 2-12 0z'),
  shell: fs('#e8dcfa', B, 'M2 7l3-3h13v9l-3 3H2z') + s(B, 'M2 7h13v9M15 7l3-3M8 7v9') + s(R, 'M2 10h13', 1),
  block: fs('#f4f4ff', B, 'M2 11l9-6 8 3-9 6z') + fs('#a9b4f0', B, 'M2 11v3l8 3 9-6V8l-9 6z') + s(O, 'M8 9l5 2'),
  thick: f('#f5c030', 'M5 2h4v10l10 1v4H3v-4l2-1z') + f('#ffe48a', 'M11 2h5v11l-5-1z') + s('#c88a10', 'M3 17h16'),
  flange: fs('#b4c4f8', B, 'M9 3l6 2-6 13-7-2z') + s(R, 'M8 6l9-3M7 9l9-3M8 3l8 6', 1),
  flip: fs('#a86a48', '#70381c', 'M2 9l9-6v14l-9-4z') + fs(O, N, 'M11 3l6 2v11l-6 2z'),
  fillet: fs('#e8f0ff', B, 'M2 6q6-3 11 0v5q-5-2-11 0z') + f(Y, 'M2 11q6-2 11 0v3q-5-2-11 0z') + s(R, 'M17 2v6M17 11v6M15 6l2 2 2-2M15 13l2-2 2 2'),
  offset: fs(Y, O, 'M9 7h8v10H9z') + s(B, 'M3 3h6v5H3zM5 12v5h4', 1) + s(R, 'M4 11l3 3'),
  boxdash: box('#dfe8ff', '#c49af0', '#6a74e0', B) + dash(R, 'M2 5l8-3 8 3v11'),
  delx: s(K, 'M3 4l9 9M11 3l-8 10M13 3h4M15 3v9M13 12h4', 1) + t(R, 7, 19, 7, 'x') + t(R, 18, 9, 6, 'x'),
  blend: fs('#8aa8f5', N, 'M2 8l5-5h11l-4 5z') + fs('#6f8ee8', N, 'M2 8h12v9H2zM14 8l4-5v9l-4 5z') + f(Y, 'M3 9h10v5H3z') + s(R, 'M2 8h12'),
  hatch: s(R, 'M4 6l12-3M4 10l12-3M4 14l12-3', 2) + s(B, 'M5 4l5 13M10 3l5 13M3 9l14 4', 1),
  curl: fs(Y, O, 'M3 14q8 0 7-10l6 1q1 9-5 12z') + s(B, 'M3 14l8 3'),
  cone: fs('#9cb4f0', B, 'M2 5l8-3 8 3v9l-8 4-8-4z') + f('#f8c040', 'M5 5h10l-2 9H7z') + f('#fff0b0', 'M7 6h6l-2 4H9z'),
  rib: s(N, 'M3 4h14M3 8h13M4 4v12M16 4v6', 2) + s(R, 'M6 5l11 12', 1) + f(O, 'M6 5h9v2H6z'),
  pyramid: fs('#f8dada', R, 'M2 14l4-9 5-2 7 10-7 4z') + s(B, 'M6 6l6 6 5 1M12 12l-1 5'),
  wire: dot('#c8d8fa', 10, 10, 7) + s(B, 'M10 2l7 4v8l-7 4-7-4V6zM3 6l7 4 7-4M10 2v16', 1),
  opcopy: op + fs('#fff', K, 'M11.500 6.500h5v7h-5zM8.500 10.500h6v7h-6z'),
  opmove: op + s('#fff', 'M13 6v12M7 12h12', 3) + s(K, 'M13 6v12M7 12h12M11 8l2-2 2 2M11 16l2 2 2-2'),
  oparrow: op + fs('#fff', K, 'M12 5l3 5h-2v3h5v4H7v-4h4v-3h-2z'),
  opcyl: f(O, 'M3 4h13v13H3z') + f(Y, 'M8 4h5v13H8z') + f('#b04a8a', 'M3 2h13v3H3z') + fs('#fff', K, 'M13 9l5 9H8z'),
  opsheet: op + fs('#eee', '#555', 'M8 10h9v3H8zM10 14h7v4h-7z'),
  opsplit: fs(O, '#a050b8', 'M2 8l4-6h7l4 5-1 8-8 2z') + f(Y, 'M5 5l9 1-2 7z') + s(R, 'M4 6l11 8') + fs('#fff', K, 'M14 10l4 8H9z'),
  opdel: op + s('#446', 'M8 8l9 9M17 8l-9 9', 2),
  oppage: op + fs('#e4f4ff', N, 'M8.500 7.500h5v8h-5zM12.500 10.500h5v7h-5z'),
  opnum: op + fs('#fff', '#555', 'M12 5h5v5h-5zM12 12h5v6h-5z'),
  opwand: op + s('#666', 'M11 9l6 8', 3) + s('#eee', 'M9 6l3 4M8 10l6-3', 1),
  opgrid: op + fs('#fff', K, 'M9.500 9.500h3v3h-3zM14.500 9.500h3v3h-3zM9.500 14.500h3v3h-3zM14.500 14.500h3v3h-3z'),
  loop: s('#2f7ae0', 'M3 10q0-6 7-6t8 6-7 5q-4-1-2-4t6 0M4 11l6 4', 3) + s('#b8e0ff', 'M3 9q0-5 7-5t7 6'),
  wave: s(B, 'M2 14q3-8 6-6t9-3', 1) + fs('#e8f4f0', '#2a6ab8', 'M7 6l6-3-2 7z') + s('#2fb04a', 'M2 14l8-6 8 6', 2),
  axisg: s(R, 'M4 3v14M1 5l3 3', 1) + f('#2aa070', 'M4 8l13 3-13 3z') + f(N, 'M10 11h6v4h-6z') + s(O, 'M15 3v6M13 7l2 2 2-2', 1),
  layers: fs('#c8b8f8', B, 'M5 3l10-1 2 4-11 2zM3 9l12-2 2 3-12 3z') + fs('#8aa0f0', N, 'M4 14l12-2v3l-9 3z'),
  press1: fs(Y, '#b07a10', 'M3 3l10-1 3 3-5 4 6 3v5H4v-4l5-3-6-3z') + s(O, 'M5 5h8M5 14h9', 2),
  press2: s(R, 'M5 2v4M8 2v4M11 2v4M14 2v4', 1) + s('#444', 'M2 8h15M2 11h15M5 11v6M14 11v6M3 14h13', 1),
  drill: f(N, 'M7 2h7v7l-3 4-4-4z') + f('#5a86f0', 'M8 2h3v8H9z') + s('#555', 'M2 13h5l3 4 3-4h5M3 17l2-3M15 17l2-3'),
  press3: s('#3a2a08', 'M2 3h16M2 17h16M6 3v14M14 3v14', 2) + f(Y, 'M7 5h6v11H7z') + s(R, 'M10 5v9M8 8l2-3 2 3'),
  bars: fs('#fff', R, 'M3 4h14v12H3z') + s(R, 'M3 4h14v12H3z', 2) + s(N, 'M7 6v9M10 6v9M13 6v9', 1),
  press4: fs(Y, '#b07a10', 'M4 4l10-2 2 3-7 3 8 1v4l-6 1 6 2-12 2v-4l4-2-6-2 6-3-5-1z') + s('#888', 'M4 10h13'),
  press5: s('#701414', 'M3 3h14M3 17h14', 3) + f(O, 'M4 5h12l-4 4H8zM8 11h4l4 4H4z') + s(N, 'M4 10h12', 2),
  twin: f('#2f66d8', 'M3 7l5-2v11l-5-2z') + f('#6a9cf5', 'M3 7l5-2 3 1-5 3z') + f('#f5a818', 'M8 8l6-4 4 2v8l-6 3-4-2z') + f('#ffd860', 'M8 8l6-4 4 2-6 3z') + f('#2f66d8', 'M8 9l3 2v6l-3-2z'),
  partcopy: f('#2f66d8', 'M3 8l5-2 3 2v3l4-1 3 2v3l-6 3-9-4z') + f('#8ab8fa', 'M3 8l5-2 3 2-4 2zM10 12l5-2 3 2-5 3z') + s(R, 'M5 4l2-3M8 5l3-3M11 5l2-3', 1),
  script: fs('#f6f6f6', '#666', 'M7 3h10l-4 14H3z') + s('#888', 'M8 6h6M7 9h6M6 12h6'),

  line: s(K, 'M3 17L17 3') + dot(R, 3, 17, 2) + dot(R, 17, 3, 2),
  arc: s(K, 'M3 4q13 0 14 13', 1) + dot(R, 3, 4, 2) + dot(R, 12, 6, 2) + dot(R, 17, 17, 2),
  rect: s(K, 'M2.500 5.500h15v9h-15z', 1) + dot(R, 3, 15, 2) + dot(R, 17, 5, 2),
  helix: s('#4d6f90', 'M3 6q7-5 14 0-7 5-14 0v4q7 5 14 0V6M3 10v4q7 5 14 0v-4', 2) + s('#9ab4cc', 'M4 9q6 3 12 0M4 13q6 3 12 0'),
  xyz: t('#d01818', 10, 8, 7, 'XYZ=') + s(K, 'M2 15q4-5 8-1t8-1', 1),
  spline: s('#888', 'M3 12l3-4 5 3 6-5M13 12l4-6', 2) + s(K, 'M8 3v4l5 4v6') + dot(R, 3, 12) + dot(R, 7, 7, 1.500) + dot(R, 13, 12) + dot(R, 17, 7, 1.500),
  textA: `<text x="10" y="16" font-size="18" font-weight="bold" text-anchor="middle" font-family="Liberation Serif, serif">A</text>`,
  offcurve: s(K, 'M4 16q-3-6 1-10 4-4 8 0 5 1 4 6-1 4-4 4z', 1) + fs('#f8c4c4', R, 'M7 13q-2-3 1-5t3 2q4-1 3 3z'),
  bridge: s(K, 'M3 3q6 0 5 6t-6 6', 1) + s(R, 'M9 5h3M13 12l4 4', 1) + s(K, 'M12 14q5 1 5-9') + dash(B, 'M3 11h12v5'),
  project: fs('#bbb', G, 'M3 6h9l3 6H5z') + ring('#777', 13, 8, 4, 1) + s(K, 'M12 12l1 7M2 14l8 1'),
  ribline: s(B, 'M4 3h14', 2) + fs('#e8eef8', '#666', 'M3 10l9-4 6 6-8 5z') + s(R, 'M14 3L7 13', 1),
  cutline: s(B, 'M6 3h12M2 17h9', 2) + s(R, 'M15 4L5 16M6 7l9 7', 2),
  histo: s('#7a2aa0', 'M3 17V9M6 17v-5M9 17V9h4v8', 2) + s('#1f8a30', 'M16 17V5', 2) + f('#1f8a30', 'M16 1l-4 6h8z'),
  sheetp: fs('#f6e6b0', O, 'M3 4h6v11H3zM9 8l7-4v11l-7 3z') + s(R, 'M12 9v5h4'),
  isect: fs('#a9d4ea', '#3a7aa0', 'M9 2l7 4-6 12-6-4z') + fs('#ddd', '#777', 'M3 11l8-4 7 3-8 4z') + s(R, 'M7 9l7 3'),
  net: fs('#e8ecff', N, 'M1 8l9-6 9 6-9 6z') + s(N, 'M4 6l9 6M7 4l9 6M4 10l9-6M7 12l9-6M2 11l2 6 3-4 2 5 3-4 3 4 3-7', 1),
  mirrorc: fs('#fff', K, 'M3 4l6 2v11l-6-2zM17 4l-6 2v11l6-2z') + s('#a02aa0', 'M5 12q2-6 3 0M16 12q-2-6-4 0', 2),
  cyl1: f('#5a86e8', 'M2 4h8v13H2z') + f('#cfe0ff', 'M4 4h2v13H4z') + s(R, 'M13 4q4 6 0 12M16 7v6', 1),
  cyl2: f('#8aacf0', 'M3 4h8v13H3z') + s(N, 'M3 4v13M7 1v18M11 4v13', 1) + s(R, 'M14 4q4 6 0 12M17 7v6', 1),
  ball: dot('#8a96a2', 10, 10, 7) + dot('#5a6878', 12, 12, 4) + dot('#c4ccd4', 9, 9, 4) + dot('#fff', 8, 7, 3),
  gball: dot('#858585', 10, 10, 7) + dot('#929292', 8, 8, 3),
  gball2: f('#7b7777', 'M4 6l6-3 6 3 1 6-6 5-6-2-2-5z') + dot('#8a8080', 9, 8, 3),
  gsq: f('#858585', 'M2 4h15v12H2z') + ring('#a07070', 14, 6, 4, 1),
  gsq2: fs('#8c8c8c', '#707070', 'M3 4h14v12H3z'),
  lamp: f('#1f6a2c', 'M4 3l5 2 2 5-5-1z') + f('#6ab83a', 'M3 5l4 0 1 4z') + `<g transform="translate(6 6) scale(0.700)">${box('#fff0a0', '#e8c030', '#c89a18', '#a07a10')}</g>`,
  guser: dot('#858585', 10, 6, 4) + f('#858585', 'M3 16l2-5h10l2 5z') + f('#777', 'M2 15h16v2H2z'),
  ggrid: f('#8d8d8d', 'M5 4h10l3 12H2z') + s('#777', 'M4 8h12M3 12h14M8 4L7 16M12 4l1 12'),
  gno: f('#8d8d8d', 'M5 4h10l3 12H2z') + ring('#a07070', 10, 10, 3, 1) + s('#a07070', 'M8 8l4 4'),
  gnodes: s(G, 'M4 4h12M10 4v12M4 16h12', 1) + [[4, 4], [16, 4], [10, 4], [10, 10], [4, 16], [16, 16], [10, 16]].map(p => dot(G, p[0], p[1], 2)).join(''),
  gcube: box('#b0b0b0', '#909090', '#808080', '#777') + ring('#a07070', 13, 6, 4, 1),
  wrench: ring('#a08010', 12, 6, 3, 4) + s('#a08010', 'M10 9l-7 7', 5) + ring('#f0cc40', 12, 6, 3, 2) + s('#f0cc40', 'M10 9l-6 6', 3) + dot('#9ab0c0', 12, 14, 3),
  dimL: s(K, 'M7 13h7V6h-3v4H7z', 2) + s(R, 'M2 9v5M1 9h3M1 14h3M8 2h6M8 1v3M14 1v3M18 6v7M16 6h3M16 13h3M7 18h8M7 16v3M15 16v3', 1),
  d1: t(K, 10, 13, 7, '1.00'),
  d2: dim('1.00', '±.05'),
  d3: dim('1.00', '-.02'),
  d4: dim('1.00', '-.03', K, '#777'),
  d5: s(R, 'M1.500 5.500h17v9h-17z', 1) + t(K, 10, 13, 7, '1.00'),
  d6: t(R, 10, 13, 8, '(1.00)', 'normal'),
  d7: t('#1a1ab0', 10, 13, 7, '10H7'),
  d8: dim('10H7', '[8.01]', '#1a1ab0', '#1a1ab0'),
  d9: dim('10', '[8.01]', '#1a1ab0', '#1a1ab0'),
  rough: s(R, 'M4 15L17 4M5 8l5 4M9 4l4 5M4 12v4h4', 1),
  rough2: s(R, 'M3 15l3-4h12', 1) + t(R, 12, 9, 7, 'R(d)'),
  dia: ring(K, 10, 11, 6, 1) + s(R, 'M4 16L16 5M11 5h5v5', 1),
  dia2: ring(K, 10, 10, 6, 1) + s(R, 'M3 17L17 3', 1),
  back: s('#2a9a98', 'M15 7q2 5-3 5H6', 3) + f('#2a9a98', 'M8 7v10l-6-5z'),
  keyp: fs('#f8f8ff', '#889', 'M9 2h7v10H9z') + s('#c0a020', 'M10 11l-7 6', 3) + ring('#d8b830', 9, 11, 3, 2),
  curve1: s(K, 'M3 5q8 0 14 6', 2) + dash(K, 'M3 15q6-5 12-3') + s(R, 'M7 10h10M13 6l3 5', 1),
  curve2: s(K, 'M3 17q7 0 6-7t7-7', 2) + s(R, 'M5 10h8M10 13l5-1M8 6l5 1', 1),
  curve3: s(K, 'M3 16q8 1 8-12', 2) + f(O, 'M8 4h5l-2 10-3 2z') + s(R, 'M16 4v8M14 9l2 3 2-3', 1),
  curve4: s(K, 'M3 9q8-5 14 2', 2) + s(R, 'M3 16q6-7 14-2M9 4l3-2M8 7v6', 1),
  film: photo('#111') + fs('#ddd', '#fff', 'M6 5h8v10H6z') + dot(R, 10, 10, 2.500),
  film2: photo('#858585') + f('#777', 'M6 5h8v10H6z') + dot('#966', 10, 10, 2),
  filmedit: photo('#111') + fs('#fff', N, 'M8 6h10v12H8z') + s(O, 'M11 13l8-6', 2) + s(B, 'M10 9h4M10 15h5'),

  gfind: f('#a5a5a5', 'M3 4l4-1v14l-4-2zM8 8h5v9H8z') + ring('#999', 14, 7, 3, 2) + s('#999', 'M14 10v6', 2),
  gfilter: s('#999', 'M2 5q5-3 8 3', 2) + f('#aaa', 'M8 9h10l-4 5v4l-2-1v-3z'),
  selpt: fs('#f4dcd8', R, 'M2.500 2.500h15v15h-15z') + s(K, 'M8 4v7M5 7h6', 1) + f('#e8a838', 'M10 10h6l-2 3v3l-2-1v-2z'),
  gundo: s(G, 'M4 9q0-5 6-5M4 9l-2-3M4 9l3-2', 2) + ring(G, 12, 13, 3, 1) + s(G, 'M12 8v10M7 13h10'),
  gbrush: f('#888', 'M3 4q8-3 11 1l-1 3H4z') + f('#999', 'M11 7l6 2v9l-4-1z'),
  marquee: `<path fill="none" stroke="#222" stroke-dasharray="3 2" d="M2.500 4.500h14v12h-14z"/>` + dot(R, 3, 4, 1.500) + dot(R, 17, 17, 1.500),
  eraser: fs('#f4f4f4', '#444', 'M2 12l5-7h7l5 5-6 7H6z') + s('#444', 'M7 5l5 6M2 12h10l2 4') + s(R, 'M8 9l6-3'),
  snap: f('#2a9a3a', 'M2 3l4 2-4 3zM2 13l4 2-4 3z') + s(R, 'M2 10h4', 2) + s(K, 'M8 6l8 8M16 6l-8 8M7 10h10', 1) + [[12, 4], [12, 16], [17, 10], [8, 10]].map(p => `<circle cx="${p[0]}" cy="${p[1]}" r="2" fill="#f0d040" stroke="#222"/>`).join(''),
  seg: s(K, 'M3 17L16 4') + dot(R, 16, 4, 1.500),
  mid: s(K, 'M3 17L17 3') + dot(R, 10, 10, 1.500),
  ctrl: s(K, 'M4 3q5 0 5 7t6 7', 1) + dot(R, 4, 3, 1.500) + dot(R, 9, 10, 1.500),
  zig: s('#a01ab8', 'M3 15l4-10 4 9 4-6 2 5', 1) + dot(R, 3, 15, 2) + dot(R, 7, 5, 2) + dot(B, 11, 14, 2) + dot(R, 17, 12, 2),
  tan: s(K, 'M2 13q8-10 16 0M10 3v14', 1) + dot(R, 10, 8, 2),
  circ: ring(K, 10, 10, 7, 1) + dot(R, 10, 10, 2),
  quad: ring(K, 10, 10, 6, 1) + dot(R, 10, 4) + dot(R, 10, 16) + dot(R, 4, 10) + dot(R, 16, 10),
  plus: s(K, 'M10 3v14M3 10h14', 1),
  online: s(K, 'M4 16L17 4') + dot(R, 7, 14, 2),
  face: fs('#a9d2f5', '#5a8ac0', 'M2 7q8-6 15-3-1 4 1 7-6 0-5 7-7 0-9-3 0-4-2-8z') + dot(R, 12, 8, 2),
  grid3: fs('#999', K, 'M5 3l10 3v12l-10-3z') + s(K, 'M8 4v12M12 5v12M5 7l10 3M5 11l10 3', 1) + s(R, 'M8 8v3'),
  tri: f('#c4c4d0', 'M1 1h18v18H1z') + fs('#fff', '#8888b8', 'M15 5v10H5z'),

  gear: ring(K, 10, 10, 5, 1) + s(K, 'M10 2v3M10 15v3M2 10h3M15 10h3M5 5l1 1M14 14l1 1M15 5l-1 1M6 14l-1 1', 2),
  treeY: fs(Y, '#b08010', 'M3 3l4-1v6l-4 1zM8 4l4-1v6l-4 1zM13 12h4v5h-4z') + s(N, 'M7 10v8M7 13h4M13 8h5', 1),
  constraint: f('#2032a8', 'M5 1l5 4-5 4zM15 1l-5 4 5 4z') + fs('#f0e840', '#555', 'M2.500 11.500h6v6h-6z') + dash(K, 'M10.500 9v9') + f('#901818', 'M12 10l7 8h-7z'),
  treeP: fs('#e070c0', '#a01a80', 'M3 3h8v6H3z') + s(N, 'M6 9v9M6 14h4M13 8h5', 1) + ring('#a01a80', 14, 14, 3, 1) + dot('#a01a80', 14, 14, 1),
  books: f('#e87818', 'M2 8l3-5h4L6 8v9H2z') + f('#e8c820', 'M6 8l3-5h3L9 8v9H6z') + f('#38a848', 'M9 8l3-5h3l-3 5v9H9z') + f('#2f7ae0', 'M12 8l3-5h4v10l-3 4h-4z') + s('#555', 'M2 8v9h14l3-4M6 8v9M9 8v9M12 8v9'),
  web: dot('#2a7ad0', 8, 12, 6) + t('#fff', 8, 16, 10, 'i') + s('#5a8ad0', 'M11 4q6 1 6 8M12 1q7 1 8 8', 1),
  doc: fs('#fff', '#2a6ab8', 'M4.500 2.500h8l4 4v11h-12z') + ring('#2a9a70', 10, 12, 3, 2),
  clock: dot('#7a8a9a', 10, 10, 8) + dot('#e4eef6', 10, 10, 6.500) + s('#223', 'M10 5v5h4', 2),
  spectrum: f('#e82020', 'M3 3h6v3H3z') + f('#f0e020', 'M3 6h6v3H3z') + f('#30c040', 'M3 9h6v3H3z') + f('#20b0e0', 'M3 12h6v2H3z') + f('#2040d0', 'M3 14h6v3H3z') + s(K, 'M10 6l6 10', 2),
  clamp: f('#3a7ac8', 'M3 4h4v5h10v3h-8v5H3z') + s(K, 'M17 7l-8 3 5 6', 2),
  robot: s('#444', 'M6 15l1-5 5-1-2-5 5-2M14 2l4 4M7 10l5 3-6 3', 2) + f('#e8a030', 'M3 15h8v3H3z'),
  cards: fs('#eee', '#666', 'M2 4l3-1v14l-3-1zM6 4h3v12H6z') + fs('#fff', '#a02020', 'M9.500 3.500h8v11h-8z') + f('#6a6ad0', 'M11 5h5v4h-5z'),
  views: s('#1f9a60', 'M10 2l6 3v9l-6 3-6-3V5zM4 5l6 5 6-5M10 2v16M4 14l6-4 6 4', 1) + s(R, 'M12 18l7-3', 2),
  camera: fs('#f8dcd0', '#c03018', 'M3 6l13-4v12L3 18z') + ring('#403080', 9, 10, 3, 2) + s('#555', 'M16 7l3 2v7l-4 2', 2),
  drawing: fs('#e8ecff', '#5a6ab8', 'M5 2h14v12H5z') + fs('#fff', '#5a6ab8', 'M1 6h14v12H1z') + f(B, 'M1 6h14v2H1z'),
  folder: fs('#f0b820', '#a87408', 'M1 4h6l2 2h8v11H2z') + fs('#ffe27a', '#a87408', 'M5 10h14l-4 8H2z'),
  check: f('#14a832', 'M3 11l3-2 3 3q3-5 8-8l1 1q-6 5-9 12H8z'),
  csys: s('#222', 'M3 2v15M3 8l8 8 6 2M3 12l14-8', 1) + s('#1f9a60', 'M11 7l8-4', 2) + s(R, 'M10 13l7 6', 2) + s('#557', 'M3 3l8 13'),
  tube: s('#3a5a98', 'M6 8l8 4', 10) + s('#9ab8ec', 'M6 7l9 4', 4) + dot('#3a5a98', 14, 12, 5) + dot('#dfe8fa', 5, 8, 4) + dot('#6a86c0', 5, 8, 2),
  body: fs('#5a80e8', N, 'M4 12l7-3 8 4-1 5-8 2-6-4z') + f('#b8ccf8', 'M4 12l7-3 8 4-7 2z') + ring(R, 7, 7, 5, 2) + s(R, 'M4 9l7-5M13 4h5M15 1v8', 2),
  chevron: s('#555', 'M4 5l6 9 6-9', 3)
};
icons.folderx = icons.folder + s('#3a3aa0', 'M11 2h7M11 5h7', 1);

const svg = (name, size, view = '0 0 20 20') => `<svg width="${size}" height="${size}" viewBox="${view}">${icons[name]}</svg>`;

document.querySelectorAll('[data-icons]').forEach(bar => {
  bar.innerHTML = bar.dataset.icons.split(' ').map(item => {
    if (item === 'v') return '<button class="drop" aria-label="更多"></button>';
    if (item === 'V') return '<button class="drop low" aria-label="工具条选项"></button>';
    if (item === '|') return '<span class="sep"></span>';
    if (item === '#') return '<span class="sep"></span><span class="grip"></span>';
    const name = item.replace('*', '');
    return `<button class="tool${item.endsWith('*') ? ' on' : ''}" aria-label="${name}">${svg(name, 20)}</button>`;
  }).join('');
});

document.querySelectorAll('[data-icon]').forEach(el => {
  const small = el.closest('.tree') || el.closest('.section');
  el.innerHTML = small ? svg(el.dataset.icon, 16, '1 1 18 18') : svg(el.dataset.icon, 20);
});

// ---- twisted ring: two tubes wound round a circle, drawn with a z-buffer ----
const canvas = document.getElementById('model');
const ctx = canvas.getContext('2d');
const SS = 2;
const W = canvas.width * SS, H = canvas.height * SS;
const depth = new Float32Array(W * H).fill(-1e9);
const nxBuf = new Float32Array(W * H), nyBuf = new Float32Array(W * H);
const strand = new Uint8Array(W * H);

const right = [0.981, 0.193, 0.030];
const down = [-0.059, 0.416, -0.906];
const front = [0.187, -0.887, -0.420];
const dot3 = (a, b) => a[0] * b[0] + a[1] * b[1] + a[2] * b[2];

const ringR = 350 * SS, twistR = 12 * SS, tubeR = 19 * SS, turns = 15, steps = 3600;
const cx = 390 * SS, cy = 185 * SS;
const phase = [275, 430];

for (let k = 0; k < 2; k++) {
  for (let i = 0; i < steps; i++) {
    const a = i / steps * Math.PI * 2;
    const psi = phase[k] * Math.PI / 180 - turns * a;
    const rr = ringR + twistR * Math.cos(psi);
    const p = [rr * Math.cos(a), rr * Math.sin(a), twistR * Math.sin(psi)];
    const px = cx + dot3(p, right), py = cy + dot3(p, down), pz = dot3(p, front);
    for (let y = Math.ceil(py - tubeR); y <= py + tubeR; y++) {
      for (let x = Math.ceil(px - tubeR); x <= px + tubeR; x++) {
        const dx = x - px, dy = y - py, q = tubeR * tubeR - dx * dx - dy * dy;
        if (q < 0 || x < 0 || y < 0 || x >= W || y >= H) continue;
        const z = pz + Math.sqrt(q), n = y * W + x;
        if (z > depth[n]) {
          depth[n] = z;
          nxBuf[n] = dx / tubeR;
          nyBuf[n] = dy / tubeR;
          strand[n] = k + 1;
        }
      }
    }
  }
}

const shade = n => {
  const x = nxBuf[n], y = nyBuf[n], z = Math.sqrt(Math.max(0, 1 - x * x - y * y));
  const d = Math.max(0, x * 0.2 - y * 0.6 + z * 0.77);
  const h = Math.pow(Math.max(0, x * 0.15 - y * 0.55 + z * 0.82), 14);
  const v = 0.5 + 0.56 * d;
  if (strand[n] === 1) return [Math.min(255, 275 * v), 10 * h, 10 * h];
  return [130 * v + 46 * h, 175 * v + 54 * h, 242 * v + 16 * h];
};

const img = ctx.createImageData(canvas.width, canvas.height);
for (let y = 0; y < canvas.height; y++) {
  for (let x = 0; x < canvas.width; x++) {
    let r = 0, g = 0, b = 0, c = 0;
    for (let j = 0; j < SS * SS; j++) {
      const n = (y * SS + (j >> 1)) * W + x * SS + (j & 1);
      if (!strand[n]) continue;
      const col = shade(n);
      r += col[0]; g += col[1]; b += col[2]; c++;
    }
    if (c) img.data.set([r / c, g / c, b / c, 255 * c / (SS * SS)], (y * canvas.width + x) * 4);
  }
}
ctx.putImageData(img, 0, 0);
```
